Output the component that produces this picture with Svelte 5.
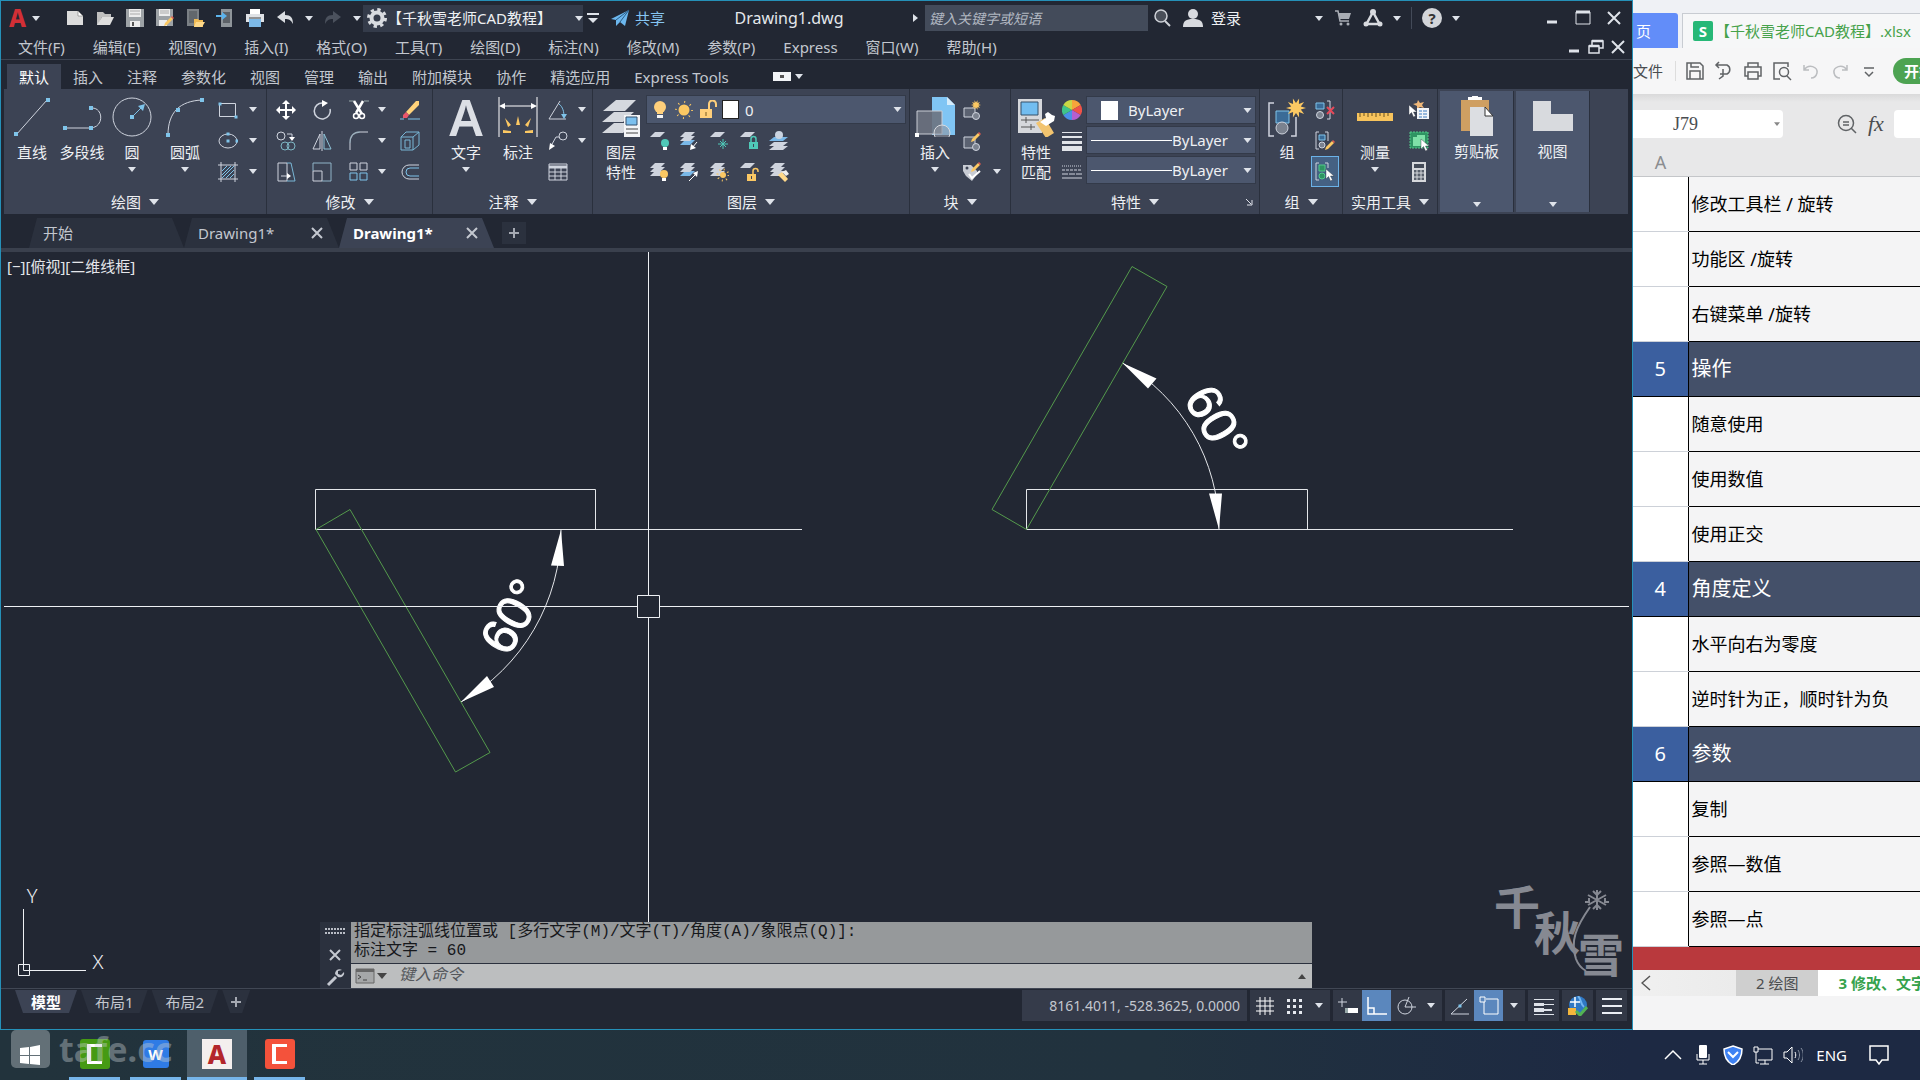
<script>
  const menus = [
    "文件(F)", "编辑(E)", "视图(V)", "插入(I)", "格式(O)", "工具(T)", "绘图(D)",
    "标注(N)", "修改(M)", "参数(P)", "Express", "窗口(W)", "帮助(H)",
  ];
  const tabs = [
    "默认", "插入", "注释", "参数化", "视图", "管理", "输出",
    "附加模块", "协作", "精选应用", "Express Tools",
  ];
  const rows = [
    { text: "修改工具栏 / 旋转" },
    { text: "功能区 /旋转" },
    { text: "右键菜单 /旋转" },
    { no: "5", text: "操作" },
    { text: "随意使用" },
    { text: "使用数值" },
    { text: "使用正交" },
    { no: "4", text: "角度定义" },
    { text: "水平向右为零度" },
    { text: "逆时针为正，顺时针为负" },
    { no: "6", text: "参数" },
    { text: "复制" },
    { text: "参照—数值" },
    { text: "参照—点" },
  ];

  const G = "#cfd4de";
  const B = "#7fc4ea";
  const Y = "#fbc863";
  const line = (body, color = G, w = 1) =>
    `<g fill="none" stroke="${color}" stroke-width="${w}">${body}</g>`;
  const dot = (x, y, s = 3) =>
    `<rect x="${x - s / 2}" y="${y - s / 2}" width="${s}" height="${s}" fill="${B}"/>`;
  // one tilted sheet of a layer stack
  const sheet = (y, color = G) => `<path d="M6 ${y}h10l-5 5h-10z" fill="${color}"/>`;
  const stack = (second = G, third = G) => sheet(9, third) + sheet(5, second) + sheet(1);
  const bulb = (x, y, c = Y) =>
    `<circle cx="${x}" cy="${y}" r="4" fill="${c}"/><path d="M${x - 2} ${y + 4}h4v3h-4z" fill="#fff"/>`;
  const lock = (x, y, c, open) =>
    `<rect x="${x}" y="${y}" width="9" height="7" fill="${c}"/><path d="M${open ? x + 6 : x + 2} ${y}v-3a2.500 2.500 0 0 1 5 0v${open ? 1 : 3}" fill="none" stroke="${c}" stroke-width="1.500"/><path d="M${x + 4.5} ${y + 2}v3" stroke="#3c4354"/>`;
  const pencil = (x, y) =>
    `<path d="M${x} ${y + 8}l1-3 6-6 2 2-6 6z" fill="${Y}"/><path d="M${x + 7} ${y - 1}l1-1 2 2-1 1z" fill="#e25a4e"/>`;
  const cursor = (x, y) =>
    `<path d="M${x} ${y}l0 10 2.500-2.500 2 4.500 2-1-2-4h3.500z" fill="#fff" stroke="#2b3240" stroke-width=".4"/>`;
  const star = (x, y, r) => {
    let d = "";
    for (let i = 0; i < 20; i++) {
      const k = i % 2 ? r * 0.5 : r;
      const a = (i * Math.PI) / 10;
      d += `${i ? "L" : "M"}${(x + k * Math.cos(a)).toFixed(1)} ${(y + k * Math.sin(a)).toFixed(1)}`;
    }
    return `<path d="${d}z" fill="${Y}"/>`;
  };
  const sun = (x, y, r) =>
    `<circle cx="${x}" cy="${y}" r="${r}" fill="${Y}"/><circle cx="${x}" cy="${y}" r="${r + 2.5}" fill="none" stroke="${Y}" stroke-width="2" stroke-dasharray="1 ${((r + 2.5) * 6.283) / 8 - 1}"/>`;

  const icons = {
    // quick access
    new: `<path d="M2 3h11l5 5v9H2z" fill="#dcdcdc"/><path d="M13 3v5h5z" fill="#fff" stroke="#666" stroke-width=".5"/>`,
    open: `<path d="M2 17V4h6l2 2h6v3H7L3 17z" fill="#bfbfbf"/><path d="M7 9h12l-4 8H2z" fill="#dedede"/>`,
    save: `<path d="M1 1h18v18H1z" fill="#9da2a6"/><path d="M4 1h12v8H4zM5 13h10v6H5z" fill="#ececec"/><path d="M5 3h10M5 6h10" stroke="#aaa"/><path d="M7 14h2v4H7z" fill="#555"/>`,
    saveas: `<path d="M1 1h17v17H1z" fill="#9da2a6"/><path d="M4 1h11v7H4zM4 12h8v6H4z" fill="#ececec"/><path d="M5 3h9M5 5h9" stroke="#aaa"/>${pencil(9, 10)}`,
    webopen: `<path d="M2 1h12v17H2z" fill="#7b8085"/><path d="M4 3h8v12H4z" fill="#62676c"/><path d="M9 19v-8h4l1 1h4v7z" fill="#f1bb54"/><path d="M11 14h9l-3 5H9z" fill="#ffd98a"/>`,
    websave: `<path d="M6 1h11v18H6z" fill="#8f959a"/><path d="M8 4h7v11H8z" fill="#5d6268"/><path d="M1 7h6V4l5 4-5 4V9H1z" fill="#5cb3ec"/>`,
    print: `<path d="M5 1h10v5H5z" fill="#fff"/><path d="M1 6h18v8H1z" fill="#dfe2e6"/><path d="M4 11h12v8H4z" fill="#7db9e8"/><path d="M4 10h12" stroke="#444"/>`,
    undo: `<path d="M2 9l8-6v4c6 0 8 3 8 9-2-4-4-5-8-5v4z" fill="#dadde2"/>`,
    redo: `<path d="M18 9l-8-6v4c-6 0-8 3-8 9 2-4 4-5 8-5v4z" fill="#4b515d"/>`,
    gear: `<circle cx="10" cy="10" r="5.500" fill="none" stroke="#d8dbe0" stroke-width="4"/><circle cx="10" cy="10" r="8.500" fill="none" stroke="#d8dbe0" stroke-width="3" stroke-dasharray="3.340 3.340"/>`,
    custom: `<path d="M4 6h12" stroke="#dfe3ea" stroke-width="2"/><path d="M5 10h10l-5 5z" fill="#dfe3ea"/>`,
    plane: `<path d="M1 11L19 2l-4 16-5-4-4 4v-6z" fill="#6cb7ee"/><path d="M6 12L19 2l-9 12" fill="none" stroke="#2b5d86"/>`,
    mag: `<circle cx="9" cy="8" r="6" fill="#4a4f59" stroke="#cfd2d8" stroke-width="1.500"/><path d="M13 13l5 5" stroke="#cfd2d8" stroke-width="2"/>`,
    user: `<circle cx="10" cy="6" r="5" fill="#d8dadf"/><path d="M0 19c0-6 3-8 10-8s10 2 10 8z" fill="#d8dadf"/>`,
    cart: `<path d="M2 3h3l2 10h9" fill="none" stroke="#a9adb5" stroke-width="1.500"/><path d="M5 5h13l-2 6H7z" fill="#a9adb5"/><circle cx="8" cy="16" r="1.500" fill="#a9adb5"/><circle cx="15" cy="16" r="1.500" fill="#a9adb5"/>`,
    tri: `<path d="M10 4l6.500 12H3.500z" fill="none" stroke="#d8dadf" stroke-width="2.500"/><circle cx="10" cy="4" r="3" fill="#d8dadf"/><circle cx="3" cy="16" r="2.500" fill="#d8dadf"/><circle cx="17" cy="16" r="2.500" fill="#d8dadf"/>`,
    min: `<path d="M5 14h10" stroke="#dfe3ea" stroke-width="3"/>`,
    max: `<path d="M3 4h14v12H3z" fill="none" stroke="#dfe3ea"/><path d="M3 4h14" stroke="#dfe3ea" stroke-width="3"/>`,
    restore: `<path d="M3 9h10v7H3zM6 9V4h11v7h-4" fill="none" stroke="#dfe3ea" stroke-width="1.500"/><path d="M3 9h10M6 4h11" stroke="#dfe3ea" stroke-width="2.500"/>`,
    close: `<path d="M4 4l12 12M16 4L4 16" stroke="#dfe3ea" stroke-width="2"/>`,
    // draw
    line: line(`<path d="M4 38L35 3"/>`) + dot(4, 37, 4) + dot(36, 3, 4),
    pline: line(`<path d="M4 31h24c14 0 14-20 2-20"/>`) + dot(3, 31, 4) + dot(29, 31, 4) + dot(29, 11, 4),
    circle: line(`<circle cx="20" cy="20" r="19"/>`) + line(`<path d="M20 20l9-9"/>`, B) + dot(20, 20, 4) + `<path d="M33 7l-2 7-5-5z" fill="${B}"/>`,
    arc: line(`<path d="M3 38C3 15 15 4 37 3"/>`) + dot(3, 38, 4) + dot(37, 3, 4) + dot(13, 13, 4),
    rect: line(`<path d="M1.500 3.500h16v13h-16z"/>`) + dot(2, 4) + dot(18, 17),
    ellipse: line(`<ellipse cx="10" cy="10" rx="9" ry="7"/>`) + dot(10, 10) + dot(10, 3) + dot(19, 10),
    hatch: line(`<path d="M3 0v20M17 0v20M0 3h20M0 17h20"/>`) + line(`<path d="M4 9l5-5M4 13l9-9M4 16L16 4M8 16l8-8M12 16l4-4"/>`, B),
    // modify
    move: `<path d="M10 0l4 4h-3v5h5V6l4 4-4 4v-3h-5v5h3l-4 4-4-4h3v-5H4v3l-4-4 4-4v3h5V4H6z" fill="#fff"/>`,
    rotate: line(`<path d="M11 3a8 8 0 1 0 7 6"/>`, G, 1.5) + `<path d="M10 0l6 3-6 4z" fill="#fff"/>`,
    trim: `<path d="M0 1h5M15 1h5" stroke="#9aa"/><path d="M5 1l8 13M14 1L7 13" stroke="#fff" stroke-width="2.500"/>` + line(`<circle cx="7" cy="16" r="2.500"/><circle cx="13" cy="16" r="2.500"/>`, "#fff", 1.5),
    erase: `<path d="M6 12L16 1h3v4L9 15z" fill="#ffd27a"/><path d="M6 12l3 3-2 3H3v-3z" fill="#e9566b"/><path d="M0 19h4M8 19h12" stroke="${B}"/>`,
    copy: line(`<circle cx="5" cy="5" r="4"/><path d="M11 3h5v4"/>`) + `<path d="M13 6h6l-3 4z" fill="#fff"/>` + line(`<circle cx="9" cy="15" r="4"/><circle cx="15" cy="15" r="4"/>`, "#7db6c4"),
    mirror: line(`<path d="M8 3v15H1zM10 0v20"/>`) + line(`<path d="M12 3v15h7z"/>`, "#8fc4d8"),
    fillet: line(`<path d="M1 19V12"/><path d="M11 1h8"/>`) + line(`<path d="M1 12C1 5 5 1 11 1"/>`, "#9db0bd", 1.5),
    box: line(`<path d="M1 6h12v13H1zM1 6l5-5h13l-6 5M19 1v13l-6 5M5 9v8h5V9z"/>`, "#79b7d6"),
    stretch: line(`<path d="M2 1v18h9V1zM5 14h7"/>`) + line(`<path d="M11 1h4l4 18h-8"/>`, "#79b7d6") + `<path d="M11 11l4 3-4 3z" fill="#fff"/>`,
    scale: line(`<path d="M1 9h9v10H1z"/>`) + line(`<path d="M1 9V1h18v18H10"/>`, "#8fb5c8"),
    array: line(`<path d="M1 1h7v7H1zM11 1h7v7h-7z"/>`) + line(`<path d="M1 11h7v7H1zM11 11h7v7h-7z"/>`, B),
    offset: line(`<path d="M19 3H9a7 7 0 0 0 0 14h10"/>`) + line(`<path d="M19 6h-9a4 4 0 0 0 0 8h9"/>`, B),
    // annotate
    dim: line(`<path d="M1 0v40M39 0v40M3 9h34"/>`, "#fff") + `<path d="M1 9l6-3v6zM39 9l-6-3v6z" fill="#fff"/><g fill="${Y}"><path d="M18 28l2-9 2 9zM10 30l-3-9 6 7zM30 30l3-9-6 7zM13 36H5v-3l8 1zM27 36h8v-3l-8 1z"/></g>`,
    angular: line(`<path d="M18 19H1L12 1"/>`) + line(`<path d="M11 4c4 3 5 8 5 13"/>`, B) + `<path d="M13 14h6l-3 5z" fill="${B}"/>`,
    leader: line(`<circle cx="15" cy="5" r="4"/><path d="M11 6H8L3 15"/>`) + `<path d="M1 19l1-7 5 3z" fill="#fff"/>`,
    table: line(`<path d="M1 2h18v16H1zM1 10h18M1 14h18M7 6v12M13 6v12"/><path d="M1 5h18" stroke-width="3"/>`),
    // layers
    layerprop: `<g fill="#d5d8de"><path d="M13 26h20L22 36H1zM13 15h20L22 25H1z"/><path d="M15 3h20L24 14H2z"/></g><path d="M23 18h16v22H23z" fill="#f4f5f7"/><path d="M25 20h11v8H25z" fill="#7cc0ee" stroke="#34506e"/><path d="M25 32h12M25 36h12" stroke="#444"/>`,
    bulb: `<circle cx="10" cy="7" r="6" fill="#ffcf7b"/><path d="M7 12h6v2H7z" fill="#ffcf7b"/><path d="M7 15h6v3H7z" fill="#f4f4f4"/>`,
    sun: sun(10, 10, 5.5),
    unlock: `<rect x="2" y="9" width="12" height="9" fill="#ffcf7b"/><path d="M11 9V4a3 3 0 0 1 7 0v3" fill="none" stroke="#ffcf7b" stroke-width="2"/><path d="M8 12v4" stroke="#7a5a20"/>`,
    lay1: sheet(1) + bulb(16, 12, "#4fc9b8"),
    lay2: stack(G, "#79b8e8") + line(`<path d="M18 11l-5 6"/>`, "#fff") + `<path d="M11 19l1-6 5 4z" fill="#fff"/>`,
    lay3: sheet(1) + line(`<path d="M14 8v10M9 13h10M11 10l6 6M17 10l-6 6"/>`, "#4fc9b8"),
    lay4: sheet(1) + lock(10, 11, "#4fc9b8", false),
    lay5: `<path d="M5 11h14l-5 4H0zM5 15h14l-5 4H0z" fill="${G}"/><path d="M5 6h14l-5 4H0z" fill="#79b8e8"/><circle cx="10" cy="4" r="4" fill="#c9d3e0"/>`,
    lay6: stack() + bulb(15, 12),
    lay7: stack(G, "#79b8e8") + line(`<path d="M10 19l7-7"/>`, "#fff") + `<path d="M19 9l-1 6-4-4z" fill="#fff"/>`,
    lay8: stack() + sun(14, 13, 3),
    lay9: sheet(1) + lock(8, 12, Y, true),
    lay10: stack() + `<path d="M9 13l4-3 6 7-3 3z" fill="#ffd98a"/><path d="M13 10l4-2 3 4-3 2z" fill="#eee"/>`,
    // block
    insert: `<path d="M17 0h15l8 8v30H17z" fill="#80c5f4"/><path d="M32 0v8h8z" fill="#d5ecfb"/><path d="M2 14h25v23H2z" fill="#6b7280" fill-opacity=".9" stroke="#c9cdd5"/><circle cx="27" cy="36" r="8" fill="#8d939e" fill-opacity=".6" stroke="#d8dbe0"/><path d="M0 36h4v4H0z" fill="#fff"/>`,
    newblock: `<path d="M2 8h11v9H2z" fill="#5b6271" stroke="${G}"/><circle cx="14" cy="16" r="3.500" fill="#7b828f" stroke="${G}"/>` + star(14, 5, 5),
    editblock: `<path d="M2 6h11v11H2z" fill="#5b6271" stroke="${G}"/><circle cx="14" cy="16" r="3.500" fill="#7b828f" stroke="${G}"/>` + pencil(9, 3),
    attr: `<path d="M1 3h8l6 6v3l-5 7-6-5-3-5z" fill="#c8ccd4"/><circle cx="5" cy="6" r="1.500" fill="#3c4354"/><path d="M7 12l3 4 8-7" fill="none" stroke="#fff" stroke-width="2"/>${pencil(9, 2)}`,
    // properties
    match: `<path d="M2 2h24v34H2z" fill="#d6d8dc"/><path d="M5 5h17v13H5z" fill="#72bdf0" stroke="#35506b"/><path d="M5 23h18M5 30h14M10 20v6M15 27v6" stroke="#555"/><path d="M20 26l9-5 9 15-8 5z" fill="#f2c46f"/><path d="M24 25l6-4-1-4 3-2 4 3 3 1-1 5-8 5z" fill="#fff"/>`,
    wheel: `<g><path d="M10 10V0a10 10 0 0 1 8.700 5z" fill="#f7a53b"/><path d="M10 10l8.700-5a10 10 0 0 1 0 10z" fill="#ef5348"/><path d="M10 10l8.700 5A10 10 0 0 1 10 20z" fill="#b45fd0"/><path d="M10 10v10a10 10 0 0 1-8.700-5z" fill="#4a90e8"/><path d="M10 10l-8.700 5a10 10 0 0 1 0-10z" fill="#3fc48a"/><path d="M10 10L1.300 5A10 10 0 0 1 10 0z" fill="#c9d845"/></g>`,
    weight: `<path d="M0 1h20v1H0zM0 5h20v2H0zM0 10h20v3H0zM0 15h20v5H0z" fill="#e2e5ea"/>`,
    ltype: line(`<path d="M0 4h20" stroke-dasharray="1 1"/><path d="M0 8h20" stroke-dasharray="3 1"/><path d="M0 12h20" stroke-dasharray="6 1"/><path d="M0 16h20"/>`),
    // group
    group: line(`<path d="M7 6H2v33h5M24 39h5V20"/>`, G, 1.5) + `<path d="M9 14h13v12H9z" fill="#3a6b97" stroke="${B}"/><circle cx="15" cy="31" r="6" fill="#7b828f" stroke="${G}"/>` + star(29, 11, 10),
    ungroup: line(`<path d="M12 1h3v18h-3"/>`) + `<path d="M1 3h8v6H1z" fill="#3a6b97" stroke="${B}"/><circle cx="5" cy="15" r="3.500" fill="#7b828f" stroke="${G}"/><path d="M12 7l7 7M19 7l-7 7" stroke="#e5495a" stroke-width="2"/>`,
    groupedit: line(`<path d="M4 1H1v17h3M10 1h3v9"/>`) + `<path d="M4 4h6v5H4z" fill="#3a6b97" stroke="${B}"/><circle cx="7" cy="14" r="3" fill="#7b828f" stroke="${G}"/>${pencil(10, 11)}`,
    groupsel: line(`<path d="M4 1H1v17h3M10 1h3v5"/>`) + `<path d="M4 3h6v6H4z" fill="#2f9463" stroke="#54c98b"/><circle cx="7" cy="14" r="3" fill="#2f9463" stroke="#54c98b"/>${cursor(11, 7)}`,
    // utilities
    ruler: `<path d="M2 16h36v8H2z" fill="#f8c45c"/><path d="M5 16v4M9 16v3M13 16v4M17 16v3M21 16v4M25 16v3M29 16v4M33 16v3" stroke="#6b5220"/>`,
    quickcalc: `<path d="M3 0h14v20H3z" fill="#d6d8dc"/><path d="M5 2h10v4H5z" fill="#444b58"/><path d="M5 8h10v10H5z" fill="#59606c"/><path d="M5 11h10M5 15h10M8 8v10M12 8v10" stroke="#d6d8dc"/>`,
    quicksel: `<path d="M9 0l2 3 4-1-2 3 2 3-4-1-3 2V6L4 4l4-1z" fill="#f0b87a"/><path d="M8 8h12v11H8z" fill="#f2f5f9"/><path d="M10 11h3M10 14h3M10 17h3M14 11h4M14 14h4M14 17h4" stroke="#3b7bc0"/>${cursor(0, 5)}`,
    selall: `<path d="M1 1h18v16H1z" fill="#2f9463" stroke="#54c98b" stroke-dasharray="2 1"/><path d="M4 6h4V4h8v8h-4v3H4z" fill="#7fe0a8"/>${cursor(12, 8)}`,
    clip: `<path d="M4 4h28v31H4z" fill="#cf9f62"/><path d="M11 4V1h4a3 3 0 0 1 6 0h4v3z" fill="#fff"/><path d="M13 11h15l8 9v20H13z" fill="#dcdee2"/><path d="M28 11v9h8z" fill="#fff" stroke="#333"/>`,
    view: `<path d="M0 5h18v13h22v17H0z" fill="#d8dade"/>`,
    // status bar
    grid: line(`<path d="M5 1v18M10 1v18M15 1v18M1 5h18M1 10h18M1 15h18"/>`, "#fff"),
    snap: `<g fill="#e6e9ef"><path d="M3 3h3v3H3zM9 3h3v3H9zM15 3h3v3h-3zM3 9h3v3H3zM9 9h3v3H9zM15 9h3v3h-3zM3 15h3v3H3zM9 15h3v3H9zM15 15h3v3h-3z"/></g>`,
    dyn: line(`<path d="M0 6h9M4 2v9"/>`) + `<path d="M7 12h13v5H7z" fill="#fff"/><path d="M7 12h3v5H7z" fill="#9aa"/>`,
    ortho: line(`<path d="M1 1v17h19M1 12h6v6"/>`, "#fff", 1.5),
    polar: line(`<circle cx="9" cy="11" r="7"/><path d="M9 11h11M9 11l4-10"/>`),
    otrack: line(`<path d="M19 18H1L17 3"/>`) + dot(10, 10),
    osnap: line(`<path d="M5 6v12h14V3H7M1 1h5v5H1z"/>`, "#fff"),
    lwt: `<g fill="#dfe3ea"><path d="M0 3h20v1H0zM0 7h10v3H0zM10 8h10v1H10zM0 12h10v4H0zM10 13h8v2h-8zM0 18h20v1H0z"/></g>`,
    iso: `<circle cx="10" cy="9" r="9" fill="#2f78c4"/><path d="M10 0c4 4 2 8 6 11" fill="none" stroke="#72b5ef" stroke-width="2"/><path d="M7 1v10M2 6h10" stroke="#fff" stroke-width="1.500"/><path d="M0 12h8v7H0z" fill="#f3b63c"/><path d="M8 15l4 4 7-8" fill="none" stroke="#53b353" stroke-width="3"/>`,
    menu: `<path d="M0 2h20v2H0zM0 9h20v2H0zM0 16h20v2H0z" fill="#eceff4"/>`,
    plus: `<path d="M10 5v10M5 10h10" stroke="#a5a9b2" stroke-width="2"/>`,
    cross: `<path d="M5 5l10 10M15 5L5 15" stroke="#c4c8d0" stroke-width="2"/>`,
    wrench: `<path d="M3 17l8-8" stroke="#c4c8d0" stroke-width="3"/><path d="M17 2l-4 1v3l3 1 3-3c1 4-3 6-6 5l-3-3c0-4 4-6 7-4z" fill="#c4c8d0"/>`,
    grip: `<path d="M0 7h20M0 11h20" stroke="#b9bdc6" stroke-width="2" stroke-dasharray="2 1"/>`,
    prompt: `<path d="M1 3h18v14H1z" fill="#a5a7a8" stroke="#666"/><path d="M1 3h18v3H1z" fill="#666"/><path d="M3 9l3 2-3 2M8 14h4" fill="none" stroke="#444"/>`,
    // spreadsheet
    wsave: line(`<path d="M2 2h13l3 3v13H2zM5 18v-8h10v8M6 2v4h8"/>`, "#606366", 1.5),
    wpdf: line(`<path d="M2 4h11a5 5 0 0 1 0 9H6M5 1L2 4l3 3M9 8v7l-4 3"/>`, "#606366", 1.5),
    wprint: line(`<path d="M5 6V2h10v4M5 15H2V6h16v9h-3M5 11h10v7H5z"/>`, "#606366", 1.5),
    wview: line(`<path d="M8 18H2V2h14v4"/><circle cx="12" cy="11" r="4.500"/><path d="M15 15l4 4"/>`, "#606366", 1.5),
    wundo: line(`<path d="M3 4v5h5M3 9c5-7 14-3 13 3-1 4-4 5-6 5"/>`, "#bbbdc0", 1.5),
    wredo: line(`<path d="M17 4v5h-5M17 9C12 2 3 6 4 12c1 4 4 5 6 5"/>`, "#bbbdc0", 1.5),
    wmore: line(`<path d="M5 7h10M6 11l4 4 4-4"/>`, "#606366", 1.5),
    wmag: line(`<circle cx="9" cy="9" r="7.500"/><path d="M14 14l5 5M6 8h6M6 11h6"/>`, "#606366", 1.5),
    // tray
    up: line(`<path d="M2 14l8-8 8 8"/>`, "#fff", 1.5),
    mic: `<rect x="6" y="0" width="8" height="13" rx="1" fill="#fff"/>` + line(`<path d="M4 9v6h12V9M10 15v4M6 19h8"/>`, "#fff"),
    shield: `<path d="M10 1l9 3c0 8-3 13-9 16C4 17 1 12 1 4z" fill="#3f82f3" stroke="#fff" stroke-width="1.500"/><path d="M5 7l5 5 5-5" fill="none" stroke="#fff" stroke-width="2"/>`,
    net: line(`<path d="M5 4h14v11H5M12 15v4M7 19h9M1 2h4v5H1zM3 7v11h3"/>`, "#fff"),
    vol: line(`<path d="M1 7h3l5-5v16l-5-5H1zM12 7c1 2 1 4 0 6"/>`, "#fff") + line(`<path d="M15 5c2 3 2 7 0 10M18 3c3 4 3 10 0 14"/>`, "#8a93a3"),
    note: line(`<path d="M1 1h18v14h-6l-3 4-3-4H1z"/>`, "#fff", 1.5),
    win: `<path d="M0 3l9-1v8H0zM10 2l10-2v10H10zM0 11h9v8l-9-1zM10 11h10v9l-10-1z" fill="#fff"/>`,
    cam: `<path d="M17 1H4v18h13" fill="none" stroke="#fff" stroke-width="4" stroke-linejoin="round"/>`,
  };

  const layerTools = ["lay1", "lay2", "lay3", "lay4", "lay5", "lay6", "lay7", "lay8", "lay9", "lay10"];
  const sheetTools = ["wsave", "wpdf", "wprint", "wview", "wundo", "wredo", "wmore"];
</script>

{#snippet icon(name, size = 20)}
  <svg class="icon" width={size} height={size} viewBox="0 0 {size} {size}" aria-hidden="true">{@html icons[name]}</svg>
{/snippet}

{#snippet tool(name)}
  <button class="tool" aria-label={name}>{@render icon(name)}</button>
{/snippet}

{#snippet drop(label = "more")}
  <button class="drop" aria-label={label}><svg width="8" height="5" viewBox="0 0 8 5"><path d="M0 0h8L4 5z" fill="#dfe3ea" /></svg></button>
{/snippet}

{#snippet big(name, label, arrow = false)}
  <button class="big">
    {#if name === "text"}<span class="big-a">A</span>{:else}{@render icon(name, 40)}{/if}
    <span class="big-label">{label}</span>
    {#if arrow}<svg width="8" height="5" viewBox="0 0 8 5"><path d="M0 0h8L4 5z" fill="#dfe3ea" /></svg>{/if}
  </button>
{/snippet}

{#snippet title(text, launcher = false)}
  <div class="panel-title">
    <button>{text}<svg width="10" height="6" viewBox="0 0 10 6"><path d="M0 0h10L5 6z" fill="#dfe3ea" /></svg></button>
    {#if launcher}<svg class="launcher" width="8" height="8" viewBox="0 0 8 8"><path d="M1 1l5 5M7 2v5H2" fill="none" stroke="#dfe3ea" /></svg>{/if}
  </div>
{/snippet}

<div class="screen">
  <div class="desktop">
    <main class="cad">
      <header class="titlebar">
        <button class="logo" aria-label="application menu">A</button>
        {@render drop()}
        <div class="quick">
          {#each ["new", "open", "save", "saveas", "webopen", "websave", "print", "undo"] as name}
            {@render tool(name)}
          {/each}
          {@render drop()}
          {@render tool("redo")}
          {@render drop()}
        </div>
        <label class="workspace">
          {@render icon("gear")}
          <select aria-label="workspace"><option>【千秋雪老师CAD教程】</option></select>
          <svg width="8" height="5" viewBox="0 0 8 5"><path d="M0 0h8L4 5z" fill="#dfe3ea" /></svg>
        </label>
        {@render tool("custom")}
        <button class="share">{@render icon("plane")}共享</button>
        <h1>Drawing1.dwg</h1>
        <div class="search">
          <svg width="5" height="8" viewBox="0 0 5 8"><path d="M0 0v8l5-4z" fill="#dfe3ea" /></svg>
          <input type="search" placeholder="键入关键字或短语" aria-label="search" />
        </div>
        <div class="account">
          {@render tool("mag")}
          <button class="login">{@render icon("user")}登录</button>
        </div>
        <div class="apps">
          {@render drop()}{@render tool("cart")}{@render tool("tri")}{@render drop()}
          <span class="divider"></span>
          <button class="help" aria-label="help">?</button>
          {@render drop()}
        </div>
        <div class="window-buttons">
          {@render tool("min")}{@render tool("max")}{@render tool("close")}
        </div>
      </header>

      <nav class="menubar">
        {#each menus as item}<button>{item}</button>{/each}
        <div class="doc-buttons">
          {@render tool("min")}{@render tool("restore")}{@render tool("close")}
        </div>
      </nav>

      <nav class="ribbon-tabs">
        {#each tabs as tab, i}<button class:active={i === 0}>{tab}</button>{/each}
        <button class="minimize" aria-label="minimize ribbon"><span></span></button>
        {@render drop()}
      </nav>

      <section class="ribbon">
        <div class="panel">
          <div class="body draw">
            {@render big("line", "直线")}
            {@render big("pline", "多段线")}
            {@render big("circle", "圆", true)}
            {@render big("arc", "圆弧", true)}
            <div class="small two">
              {#each ["rect", "ellipse", "hatch"] as name}{@render tool(name)}{@render drop()}{/each}
            </div>
          </div>
          {@render title("绘图")}
        </div>
        <div class="panel">
          <div class="body edit">
            <div class="small modify">
              {@render tool("move")}{@render tool("rotate")}{@render tool("trim")}{@render drop()}{@render tool("erase")}
              {@render tool("copy")}{@render tool("mirror")}{@render tool("fillet")}{@render drop()}{@render tool("box")}
              {@render tool("stretch")}{@render tool("scale")}{@render tool("array")}{@render drop()}{@render tool("offset")}
            </div>
          </div>
          {@render title("修改")}
        </div>
        <div class="panel">
          <div class="body annotate">
            {@render big("text", "文字", true)}
            {@render big("dim", "标注")}
            <div class="small two">
              {@render tool("angular")}{@render drop()}
              {@render tool("leader")}{@render drop()}
              {@render tool("table")}
            </div>
          </div>
          {@render title("注释")}
        </div>
        <div class="panel">
          <div class="body layers">
            {@render big("layerprop", "图层\n特性")}
            <div class="layer-side">
              <label class="combo">
                {@render icon("bulb")}{@render icon("sun")}{@render icon("unlock")}
                <span class="swatch"></span>
                <select aria-label="layer"><option>0</option></select>
                <svg width="9" height="5" viewBox="0 0 8 5"><path d="M0 0h8L4 5z" fill="#dfe3ea" /></svg>
              </label>
              <div class="layer-grid">
                {#each layerTools as name}{@render tool(name)}{/each}
              </div>
            </div>
          </div>
          {@render title("图层")}
        </div>
        <div class="panel">
          <div class="body block">
            {@render big("insert", "插入", true)}
            <div class="small two">
              {@render tool("newblock")}<span></span>
              {@render tool("editblock")}<span></span>
              {@render tool("attr")}{@render drop()}
            </div>
          </div>
          {@render title("块")}
        </div>
        <div class="panel">
          <div class="body props">
            {@render big("match", "特性\n匹配")}
            <div class="small one">
              {@render tool("wheel")}{@render tool("weight")}{@render tool("ltype")}
            </div>
            <div class="combos">
              {#each ["color", "lineweight", "linetype"] as kind}
                <label class="combo {kind}">
                  {#if kind === "color"}<span class="swatch"></span>{:else}<span class="sample"></span>{/if}
                  <select aria-label={kind}><option>ByLayer</option></select>
                  <svg width="9" height="5" viewBox="0 0 8 5"><path d="M0 0h8L4 5z" fill="#dfe3ea" /></svg>
                </label>
              {/each}
            </div>
          </div>
          {@render title("特性", true)}
        </div>
        <div class="panel">
          <div class="body group">
            {@render big("group", "组")}
            <div class="small one">
              {@render tool("ungroup")}{@render tool("groupedit")}
              <button class="tool picked" aria-label="groupsel">{@render icon("groupsel")}</button>
            </div>
          </div>
          {@render title("组")}
        </div>
        <div class="panel">
          <div class="body utils">
            {@render big("ruler", "测量", true)}
            <div class="small one">
              {@render tool("quicksel")}{@render tool("selall")}{@render tool("quickcalc")}
            </div>
          </div>
          {@render title("实用工具")}
        </div>
        <div class="panel folded">
          {@render big("clip", "剪贴板")}
          {@render drop()}
        </div>
        <div class="panel folded">
          {@render big("view", "视图")}
          {@render drop()}
        </div>
      </section>

      <nav class="doc-tabs">
        <button class="doc">开始</button>
        <button class="doc">Drawing1* {@render icon("cross")}</button>
        <button class="doc active">Drawing1* {@render icon("cross")}</button>
        <button class="add" aria-label="new drawing">{@render icon("plus")}</button>
      </nav>

      <section class="canvas">
        <svg class="drawing">
          <g transform="translate(-1 -252)">
            <g fill="none" stroke="#e4e6ea">
              <path d="M315.500 529.500V489.500H595.500V529.500M315.500 529.500H802" />
              <path d="M1026.500 529.500V489.500H1307.500V529.500M1026.500 529.500H1513" />
              <path d="M561 530A199 199 0 0 1 461 702" />
              <path d="M1122.500 363A192.500 192.500 0 0 1 1219 529.500" />
            </g>
            <g fill="none" stroke="#549a4c">
              <path d="M316 529.500L350 509.500L490 752.500L455.500 772z" />
              <path d="M1026.500 529.500L992 509.500L1132 266.500L1167 286.500z" />
            </g>
            <g fill="#fff">
              <path d="M561 530l-10 35.500 13 .5zM461 702l26-26 7 11z" />
              <path d="M1219 529.500l-10-36h13zM1122.500 363l34 15.500-8.500 10z" />
              <text class="angle" transform="translate(527 625) rotate(-60)">60°</text>
              <text class="angle" transform="translate(1202 431) rotate(60)">60°</text>
            </g>
            <g fill="none" stroke="#eef0f4">
              <path d="M648.500 252V595M648.500 618V988M4 606.500H637M660 606.500H1629" />
              <path d="M637.500 595.500h22v22h-22z" />
              <path d="M23.500 909V970.500H86M18.500 964.500h11v11h-11z" />
            </g>
            <g class="ucs"><text x="32" y="903">Y</text><text x="98" y="969">X</text></g>
          </g>
        </svg>
        <p class="viewport-label">[−][俯视][二维线框]</p>
        <svg class="mark" width="134" height="108" viewBox="0 0 134 108" fill="#868992">
          <text x="0" y="48">千</text>
          <text x="40" y="74">秋</text>
          <text x="84" y="96">雪</text>
          <path d="M103 14v20M94 19l18 10M112 19l-18 10M99 15l4 4 4-4M99 33l4-4 4 4M95 22v4h-4M111 22v4h4M96 31c-14 20-20 34-14 52q3 8 10 12" fill="none" stroke="#868992" stroke-width="2" />
        </svg>
        <div class="command">
          <div class="command-side">
            {@render tool("grip")}{@render tool("cross")}{@render tool("wrench")}
          </div>
          <div class="command-main">
            <div class="history">
              <p>指定标注弧线位置或 [多行文字(M)/文字(T)/角度(A)/象限点(Q)]:</p>
              <p>标注文字 = 60</p>
            </div>
            <label class="prompt">
              {@render icon("prompt")}
              <svg width="10" height="6" viewBox="0 0 10 6"><path d="M0 0h10L5 6z" fill="#444" /></svg>
              <input placeholder="键入命令" aria-label="command" />
              <svg width="8" height="5" viewBox="0 0 8 5"><path d="M0 5h8L4 0z" fill="#444" /></svg>
            </label>
          </div>
        </div>
      </section>

      <footer class="status">
        <div class="layouts">
          <button class="active">模型</button>
          <button>布局1</button>
          <button>布局2</button>
          <button class="plus" aria-label="new layout">{@render icon("plus")}</button>
        </div>
        <output>8161.4011, -528.3625, 0.0000</output>
        <div class="cell">{@render tool("grid")}{@render tool("snap")}{@render drop()}</div>
        <div class="cell">
          {@render tool("dyn")}
          <button class="tool on" aria-label="ortho">{@render icon("ortho")}</button>
          {@render tool("polar")}{@render drop()}
        </div>
        <div class="cell">
          {@render tool("otrack")}
          <button class="tool on" aria-label="osnap">{@render icon("osnap")}</button>
          {@render drop()}
        </div>
        <div class="cell single">{@render tool("lwt")}</div>
        <div class="cell single">{@render tool("iso")}</div>
        <div class="cell single">{@render tool("menu")}</div>
      </footer>
    </main>

    <aside class="wps">
      <div class="wps-tabs">
        <button class="home">页</button>
        <button class="file"><i>S</i>【千秋雪老师CAD教程】.xlsx</button>
      </div>
      <div class="wps-tools">
        <button class="file-menu">文件</button>
        {#each sheetTools as name}{@render tool(name)}{/each}
        <button class="pill">开始</button>
      </div>
      <div class="formula">
        <label class="name-box">
          <input value="J79" aria-label="name box" />
          <svg width="6" height="4" viewBox="0 0 8 5"><path d="M0 0h8L4 5z" fill="#888" /></svg>
        </label>
        {@render tool("wmag")}
        <span class="fx">fx</span>
        <input class="formula-input" aria-label="formula" />
      </div>
      <table>
        <colgroup><col class="col-a" /><col /></colgroup>
        <thead><tr><th>A</th><th></th></tr></thead>
        <tbody>
          {#each rows as row}
            <tr class:section={row.no}><td>{row.no ?? ""}</td><td>{row.text}</td></tr>
          {/each}
        </tbody>
      </table>
      <div class="red"></div>
      <div class="sheets">
        <svg width="10" height="16" viewBox="0 0 10 16"><path d="M9 1L1 8l8 7" fill="none" stroke="#555" stroke-width="1.500" /></svg>
        <button>2 绘图</button>
        <button class="active">3 修改、文字</button>
      </div>
    </aside>
  </div>

  <footer class="taskbar">
    <div class="stamp"><span class="badge"></span>tafe.cc</div>
    <button class="start-button" aria-label="start">{@render icon("win")}</button>
    <button class="app green" aria-label="recorder"><i>{@render icon("cam")}</i></button>
    <button class="app blue" aria-label="wps"><i>W</i></button>
    <button class="app current" aria-label="autocad"><i>A</i></button>
    <button class="app orange" aria-label="camtasia"><i>{@render icon("cam")}</i></button>
    <div class="tray">
      {#each ["up", "mic", "shield", "net", "vol"] as name}{@render tool(name)}{/each}
      <span>ENG</span>
      {@render tool("note")}
    </div>
  </footer>
</div>

<style>
  :global(body) {
    background: #1e2b3a;
  }

  .screen {
    --text: #c3c7cf;
    --dark: #222733;
    --panel: #3c4354;
    --field: #4c576e;
    min-height: 100vh;
    display: flex;
    flex-direction: column;
    overflow: hidden;
    font: 15px/20px "Noto Sans", "Noto Sans CJK SC", sans-serif;
    color: var(--text);
  }

  button,
  input,
  select {
    margin: 0;
    padding: 0;
    border: 0;
    outline: 0;
    background: none;
    font: inherit;
    color: inherit;
    appearance: none;
    white-space: nowrap;
  }

  svg {
    display: block;
    flex: none;
  }

  p {
    margin: 0;
  }

  .tool,
  .drop {
    display: flex;
    flex: none;
    align-items: center;
    justify-content: center;
    min-width: 0;
  }

  .desktop {
    flex: 1;
    display: grid;
    grid-template-columns: minmax(0, 1fr) 287px;
  }

  .cad {
    display: flex;
    flex-direction: column;
    min-width: 0;
    border: 1px solid #2590b8;
    box-sizing: border-box;
    background: var(--dark);
  }

  /* title bar */
  .titlebar {
    display: flex;
    align-items: center;
    height: 34px;
    padding: 0 8px;
  }

  .logo {
    margin-right: 6px;
    font-size: 24px;
    line-height: 24px;
    font-weight: 800;
    color: #d32f36;
  }

  .quick {
    display: flex;
    gap: 10px;
    margin-left: 25px;
  }

  .workspace {
    display: flex;
    align-items: center;
    width: 220px;
    height: 27px;
    margin-left: 2px;
    padding-left: 4px;
    box-sizing: border-box;
    background: #343b4a;
    color: #eef0f3;
  }

  .workspace select {
    flex: 1;
  }

  .share {
    display: flex;
    align-items: center;
    gap: 5px;
    margin-left: 7px;
    color: #86c5f2;
  }

  h1 {
    flex: 1;
    margin: 0;
    text-align: center;
    font: inherit;
    font-size: 16px;
    color: #e4e7ec;
  }

  .search {
    display: flex;
    align-items: center;
    gap: 7px;
  }

  .search input {
    width: 223px;
    height: 26px;
    padding: 0 4px;
    box-sizing: border-box;
    background: #434b5a;
    font-size: 14px;
    font-style: italic;
  }

  ::placeholder {
    color: #b1b7c1;
    opacity: 1;
  }

  .account,
  .login,
  .apps,
  .window-buttons {
    display: flex;
    align-items: center;
    gap: 8px;
  }

  .account {
    margin: 0 74px 0 4px;
    gap: 11px;
    color: #eef0f3;
  }

  .apps {
    gap: 10px;
  }

  .divider {
    width: 1px;
    height: 22px;
    background: #434a58;
  }

  .help {
    width: 20px;
    height: 20px;
    border-radius: 50%;
    background: #d3d5d9;
    color: #333;
    font-weight: 700;
  }

  .window-buttons {
    gap: 11px;
    margin-left: 82px;
  }

  /* menus */
  .menubar {
    display: flex;
    align-items: center;
    gap: 28px;
    height: 24px;
    padding: 0 4px 0 17px;
    border-bottom: 1px solid #3e4451;
  }

  .doc-buttons {
    display: flex;
    gap: 2px;
    margin-left: auto;
  }

  .ribbon-tabs {
    display: flex;
    align-items: flex-end;
    height: 29px;
    padding-left: 6px;
  }

  .ribbon-tabs > button {
    height: 25px;
    padding: 0 12px;
  }

  .ribbon-tabs > button.active {
    background: var(--panel);
    color: #fff;
  }

  .ribbon-tabs > .minimize {
    margin-left: 20px;
    padding-right: 4px;
  }

  .minimize span {
    display: block;
    width: 18px;
    height: 9px;
    background: radial-gradient(circle, #555 0 2px, #f2f4f7 2px);
  }

  .ribbon-tabs > .drop {
    padding: 0;
  }

  /* ribbon */
  .ribbon {
    display: flex;
    height: 125px;
    margin: 0 4px 0 3px;
    background: var(--panel);
    color: #eef0f3;
  }

  .panel {
    display: flex;
    flex-direction: column;
    box-sizing: border-box;
    border-right: 1px solid #2a303d;
  }

  .body {
    display: flex;
    height: 93px;
    padding: 5px 3px 4px 3px;
  }

  .big {
    display: flex;
    flex-direction: column;
    align-items: center;
    width: 50px;
    padding-top: 3px;
    white-space: pre-line;
  }

  .big-label {
    padding: 5px 0;
    white-space: pre;
  }

  .big-a {
    height: 40px;
    font-size: 50px;
    line-height: 40px;
    font-weight: 600;
    color: #dcdfe5;
  }

  .small {
    display: grid;
    grid-template-rows: repeat(3, 31px);
  }

  .two {
    grid-template-columns: 30px 20px;
  }

  .one {
    grid-template-columns: 28px;
  }

  .modify {
    grid-template-columns: 32px 40px 34px 12px 44px;
  }

  .body.edit {
    padding-right: 0;
  }

  .draw .big:nth-child(4) {
    width: 56px;
  }

  .body.annotate {
    padding: 5px 1px 4px 6px;
  }

  .annotate .big:first-child {
    width: 54px;
  }

  .annotate .two {
    grid-template-columns: 30px 18px;
  }

  .block .big,
  .props .big {
    width: 44px;
  }

  .group .big {
    width: 48px;
  }

  .utils .big {
    width: 58px;
  }

  .utils .small {
    grid-template-columns: 30px;
  }

  .panel-title {
    display: flex;
    align-items: center;
    justify-content: center;
    position: relative;
    height: 22px;
  }

  .panel-title button {
    display: flex;
    align-items: center;
    gap: 8px;
  }

  .launcher {
    position: absolute;
    right: 6px;
  }

  .combo {
    display: flex;
    align-items: center;
    box-sizing: border-box;
    width: 170px;
    height: 28px;
    padding-right: 3px;
    border: 1px solid #333a49;
    background: var(--field);
  }

  .combo select {
    flex: 1;
    padding-left: 10px;
  }

  .layers .combo {
    gap: 4px;
    width: 260px;
    height: 29px;
    margin: 1px 0;
    padding-left: 3px;
  }

  .layers .combo select {
    padding-left: 2px;
  }

  .swatch {
    width: 17px;
    height: 19px;
    box-sizing: border-box;
    border: 1px solid #222;
    background: #fff;
  }

  .color .swatch {
    margin-left: 14px;
    border: 0;
  }

  .sample {
    width: 81px;
    height: 1px;
    margin-left: 4px;
    background: #fff;
  }

  .lineweight select,
  .linetype select {
    padding-left: 0;
  }

  .combos {
    display: flex;
    flex-direction: column;
    gap: 2px;
    padding-top: 2px;
  }

  .layer-grid {
    display: grid;
    grid-template-columns: repeat(5, 30px);
    grid-auto-rows: 31px;
  }

  .layer-grid .tool {
    justify-content: flex-start;
    padding-left: 3px;
  }

  .picked {
    border: 1px solid #6bb2e8;
    background: #456183;
  }

  .panel.folded {
    align-items: center;
    width: 74px;
    margin: 2px 0 2px 2px;
    padding-top: 2px;
    background: var(--field);
  }

  .folded .big {
    flex: 1;
  }

  .folded .drop {
    padding-bottom: 5px;
  }

  /* drawing tabs */
  .doc-tabs {
    display: flex;
    align-items: flex-end;
    height: 34px;
    padding-left: 28px;
    border-bottom: 4px solid #3a404d;
  }

  .doc {
    display: flex;
    align-items: center;
    justify-content: space-between;
    width: 155px;
    height: 30px;
    padding: 0 12px 0 14px;
    box-sizing: border-box;
    background: #2b313e;
    clip-path: polygon(8px 0, calc(100% - 12px) 0, 100% 100%, 0 100%);
  }

  .doc.active {
    background: var(--panel);
    color: #fff;
    font-weight: 700;
  }

  .add {
    height: 22px;
    margin: 0 0 4px 8px;
    padding: 0 2px;
    background: #2b313e;
  }

  /* model space */
  .canvas {
    position: relative;
    flex: 1;
    overflow: hidden;
    border-bottom: 1px solid #414754;
  }

  .drawing {
    position: absolute;
    width: 100%;
    height: 100%;
  }

  .angle {
    font: 50px "Liberation Sans", Arial, sans-serif;
    text-anchor: middle;
    stroke: #fff;
  }

  .ucs {
    font-size: 20px;
    font-weight: 300;
    fill: #eef0f4;
    text-anchor: middle;
  }

  .viewport-label {
    padding: 4px 6px;
    color: #e4e6ea;
  }

  .mark {
    position: absolute;
    right: 4px;
    bottom: 4px;
    font-family: "Noto Sans CJK SC", sans-serif;
    font-size: 46px;
    font-weight: 700;
  }

  .command {
    position: absolute;
    left: 319px;
    right: 320px;
    bottom: 0;
    display: flex;
    background: #2b313e;
    color: #16181c;
  }

  .command-side {
    display: flex;
    flex-direction: column;
    justify-content: space-between;
    padding: 0 6px 0 5px;
  }

  .command-main {
    flex: 1;
    font: 16px/19px "Liberation Mono", "Noto Sans CJK SC", monospace;
  }

  .history {
    padding: 1px 3px 2px;
    background: #96999b;
  }

  .prompt {
    display: flex;
    align-items: center;
    gap: 2px;
    height: 24px;
    margin-top: 1px;
    padding: 0 6px 0 4px;
    background: #bcbebf;
  }

  .prompt input {
    flex: 1;
    padding-left: 10px;
    font-style: italic;
  }

  .prompt ::placeholder {
    color: #55585c;
  }

  /* status bar */
  .status {
    display: flex;
    align-items: flex-start;
    gap: 3px;
    height: 39px;
    padding: 1px 5px 0 14px;
  }

  .layouts {
    display: flex;
    flex: 1;
    gap: 4px;
  }

  .layouts button {
    height: 23px;
    padding: 0 14px;
    background: #2b313e;
    clip-path: polygon(0 0, 100% 0, calc(100% - 8px) 100%, 8px 100%);
  }

  .layouts .active {
    padding: 0 16px;
    background: var(--panel);
    color: #fff;
    font-weight: 700;
  }

  .layouts .plus {
    padding: 0 4px;
  }

  output {
    width: 225px;
    height: 31px;
    padding-right: 7px;
    box-sizing: border-box;
    background: #353b4a;
    font-size: 14px;
    line-height: 31px;
    text-align: right;
  }

  .cell {
    display: flex;
    height: 31px;
    background: #323846;
  }

  .cell .tool {
    width: 29px;
  }

  .cell .drop {
    width: 22px;
  }

  .single .tool {
    width: 31px;
  }

  .on {
    background: #5b87bd;
  }

  /* spreadsheet window */
  .wps {
    display: flex;
    flex-direction: column;
    overflow: hidden;
    background: #f4f4f5;
    color: #4a4d50;
  }

  .wps-tabs {
    display: flex;
    gap: 4px;
    height: 35px;
    padding-top: 13px;
    background: #eff1f5;
  }

  .home {
    width: 45px;
    padding: 0 27px 0 3px;
    box-sizing: border-box;
    border-radius: 0 3px 0 0;
    background: #628df9;
    color: #fff;
  }

  .file {
    display: flex;
    flex: 1;
    align-items: center;
    gap: 2px;
    padding-left: 10px;
    border: 1px solid #c8ccd2;
    border-width: 1px 0 0 1px;
    background: #f6f7f8;
    color: #46a24b;
  }

  i {
    display: flex;
    align-items: center;
    justify-content: center;
    font-style: normal;
  }

  .file i {
    width: 20px;
    height: 20px;
    border-radius: 2px;
    background: #26b877;
    color: #fff;
    font-weight: 700;
  }

  .wps-tools {
    display: flex;
    align-items: center;
    gap: 9px;
    height: 46px;
    background: #f6f6f7;
  }

  .file-menu {
    flex: none;
    padding-right: 12px;
    border-right: 1px solid #ddd;
  }

  .pill {
    flex: none;
    height: 26px;
    margin-left: 5px;
    padding: 0 11px;
    border-radius: 13px;
    background: #4da352;
    color: #fff;
    font-weight: 700;
  }

  .formula {
    display: flex;
    align-items: center;
    height: 51px;
    padding-top: 9px;
    box-sizing: border-box;
    background: linear-gradient(#d9d9da, #e8e8e9 8px);
  }

  .name-box {
    display: flex;
    align-items: center;
    width: 150px;
    height: 28px;
    margin-right: 54px;
    padding-right: 3px;
    box-sizing: border-box;
    border-radius: 0 4px 4px 0;
    background: #fff;
    font-family: "Liberation Serif", serif;
    font-size: 18px;
  }

  .name-box input {
    flex: 1;
    min-width: 0;
    padding-right: 36px;
    text-align: center;
  }

  .fx {
    margin: 0 10px 0 11px;
    font: italic 22px/24px "Liberation Serif", serif;
  }

  .formula-input {
    flex: 1;
    min-width: 0;
    height: 28px;
    border-radius: 4px 0 0 4px;
    background: #fff;
  }

  table {
    width: 100%;
    table-layout: fixed;
    border-collapse: collapse;
    color: #000;
    font-size: 18px;
  }

  .col-a {
    width: 55px;
  }

  th {
    height: 31px;
    padding: 4px 0 0;
    box-sizing: border-box;
    border-bottom: 1px solid #c4c6c9;
    background: #e8e8e9;
    color: #8b8d90;
    font-weight: 400;
  }

  td {
    height: 55px;
    padding: 0 3px;
    box-sizing: border-box;
    border: 1px solid #000;
    border-right: 0;
    background: #f4f4f5;
    white-space: nowrap;
    overflow: hidden;
  }

  tbody tr:first-child td {
    border-top: 0;
  }

  td:first-child {
    border-color: #cdd1d8;
    border-left: 0;
    background: #fff;
    text-align: center;
  }

  .section td {
    background: #445069;
    color: #fff;
    font-size: 20px;
  }

  .section td:first-child {
    border-color: #000;
    background: #3b5f9f;
  }

  .red {
    height: 23px;
    background: #b9393d;
  }

  .sheets {
    display: flex;
    align-items: center;
    background: linear-gradient(90deg, #f0f0f0, #e2e2e2);
  }

  .sheets svg {
    margin: 0 85px 0 8px;
  }

  .sheets button {
    height: 26px;
    padding: 0 20px;
    background: #cfcfcf;
  }

  .sheets .active {
    background: #fff;
    color: #35a24c;
    font-weight: 700;
  }

  /* taskbar */
  .taskbar {
    position: relative;
    display: flex;
    height: 50px;
    background: linear-gradient(90deg, #22333c, #21323e 60%, #1d2943 85%);
  }

  .stamp {
    position: absolute;
    left: 11px;
    top: 0;
    z-index: 1;
    display: flex;
    gap: 9px;
    font-size: 34px;
    line-height: 38px;
    font-weight: 700;
    color: #c6cdd0;
    opacity: 0.4;
    pointer-events: none;
  }

  .badge {
    width: 39px;
    height: 38px;
    border-radius: 5px;
    background: #c6cdd0;
  }

  .start-button {
    position: relative;
    z-index: 2;
    width: 60px;
    margin-right: 9px;
    padding: 0 20px;
  }

  .app {
    display: flex;
    align-items: center;
    justify-content: center;
    width: 51px;
    margin-right: 10px;
    border-bottom: 3px solid #76b5ea;
  }

  .app i {
    width: 30px;
    height: 30px;
    border-radius: 3px;
    color: #fff;
    font-weight: 700;
  }

  .green i {
    background: #459a13;
  }

  .blue {
    margin-right: 6px;
  }

  .blue i {
    width: 26px;
    height: 28px;
    background: #2f7be5;
  }

  .current {
    width: 60px;
    margin-right: 7px;
    background: #4e5f6b;
  }

  .current i {
    border-radius: 0;
    background: #f4efee;
    color: #b3262b;
    font-size: 26px;
    font-weight: 800;
  }

  .orange i {
    background: #f4523b;
  }

  .tray {
    display: flex;
    align-items: center;
    gap: 10px;
    margin-left: auto;
    padding-right: 31px;
    color: #fff;
  }

  .tray span {
    margin: 0 12px 0 3px;
  }
</style>
